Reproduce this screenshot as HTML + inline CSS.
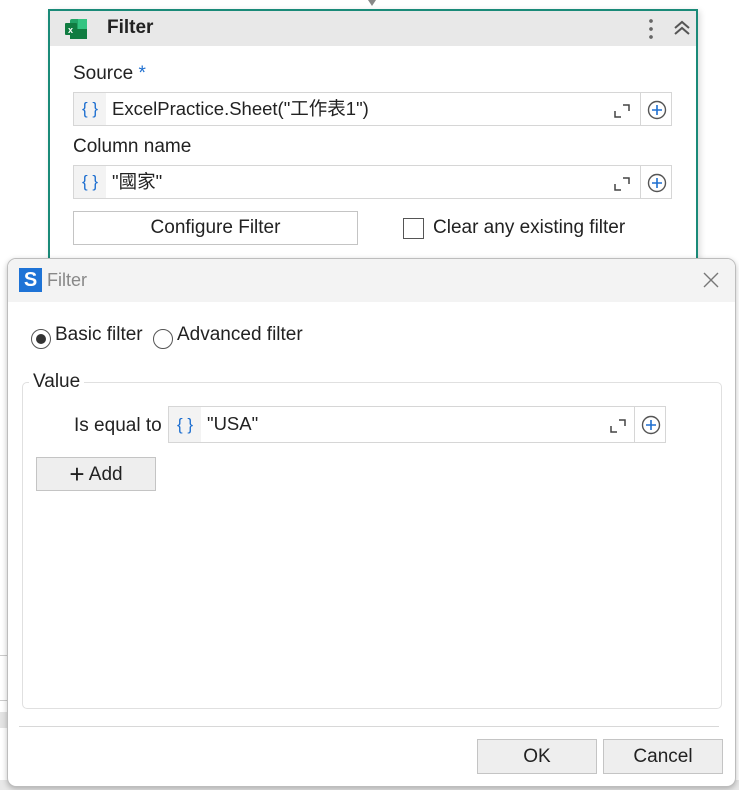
<!DOCTYPE html>
<html><head><meta charset="utf-8"><style>
*{box-sizing:border-box;margin:0;padding:0}
body{width:739px;height:790px;background:#fff;position:relative;overflow:hidden;font-family:"Liberation Sans","Noto Sans CJK TC",sans-serif;color:#222}
.a{position:absolute}
.inp{position:absolute;border:1px solid #d6d6d6;background:#fff;height:34px}
.br{position:absolute;left:0;top:0;bottom:0;width:32px;background:#f3f3f3;color:#1e6fd0;font-size:17px;text-align:center;line-height:32px}
.txt{position:absolute;left:38px;top:0;line-height:32px;font-size:18.5px}
.pl{position:absolute;border:1px solid #d6d6d6;background:#fff;height:34px;width:32px}
.btn{position:absolute;border:1px solid #c4c4c4;background:#eeeeee;font-size:19px;text-align:center}
</style></head><body>
<div class="a" style="left:0;top:655px;width:10px;height:1px;background:#ccc"></div>
<div class="a" style="left:0;top:700px;width:10px;height:1px;background:#ccc"></div>
<div class="a" style="left:0;top:712px;width:10px;height:16px;background:#e4e4e4"></div>
<div class="a" style="left:0;top:780px;width:739px;height:10px;background:#e8e8e8"></div>
<div class="a" style="left:368px;top:0;width:0;height:0;border-left:4px solid transparent;border-right:4px solid transparent;border-top:6px solid #888"></div>
<div class="a" style="left:48px;top:9px;width:650px;height:260px;border:2px solid #1a8a78;border-bottom:none;background:#fff;box-shadow:2px 2px 6px rgba(0,0,0,.15)">
 <div class="a" style="left:0;top:0;width:646px;height:35px;background:#e8e8e8"></div>
 <svg class="a" style="left:14px;top:7px" width="24" height="22"><rect x="6" y="1" width="17" height="20" rx="2" fill="#21a366"/><rect x="14" y="1" width="9" height="10" fill="#33c481"/><rect x="6" y="11" width="17" height="10" fill="#107c41"/><rect x="1" y="5" width="12" height="12" rx="1" fill="#107c41"/><text x="4" y="15" font-size="9" fill="#fff" font-family="Liberation Sans" font-weight="bold">x</text></svg>
 <div class="a" style="left:57px;top:6px;font-size:19px;font-weight:bold">Filter</div>
 <div class="a" style="left:599px;top:6px;width:4px;height:24px;background:radial-gradient(circle,#666 1.7px,transparent 2px) 0 0/4px 8px"></div>
 <svg class="a" style="left:623px;top:9px" width="18" height="16"><path d="M2 8l7-6 7 6M2 14l7-6 7 6" fill="none" stroke="#555" stroke-width="2"/></svg>
</div>
<div class="a" style="left:73px;top:63px;font-size:19px">Source <span style="color:#1e6fd0">*</span></div>
<div class="inp" style="left:73px;top:92px;width:568px"><div class="br">{ }</div><div class="txt">ExcelPractice.Sheet("工作表1")</div>
<svg class="a" style="left:540px;top:10px" width="16" height="16"><path d="M1 8v6h6M9 2h6v6" fill="none" stroke="#444" stroke-width="1.5"/></svg></div>
<div class="pl" style="left:640px;top:92px"><svg class="a" style="left:6px;top:7px" width="20" height="20"><circle cx="10" cy="10" r="8.5" fill="none" stroke="#555" stroke-width="1.4"/><path d="M10 5v10M5 10h10" stroke="#1e6fd0" stroke-width="1.6"/></svg></div>
<div class="a" style="left:73px;top:136px;font-size:19px">Column name</div>
<div class="inp" style="left:73px;top:165px;width:568px"><div class="br">{ }</div><div class="txt">"國家"</div>
<svg class="a" style="left:540px;top:10px" width="16" height="16"><path d="M1 8v6h6M9 2h6v6" fill="none" stroke="#444" stroke-width="1.5"/></svg></div>
<div class="pl" style="left:640px;top:165px"><svg class="a" style="left:6px;top:7px" width="20" height="20"><circle cx="10" cy="10" r="8.5" fill="none" stroke="#555" stroke-width="1.4"/><path d="M10 5v10M5 10h10" stroke="#1e6fd0" stroke-width="1.6"/></svg></div>
<div class="a" style="left:73px;top:211px;width:285px;height:34px;border:1px solid #c4c4c4;background:#fff;font-size:19px;text-align:center;line-height:32px">Configure Filter</div>
<div class="a" style="left:403px;top:218px;width:21px;height:21px;border:1.5px solid #555;background:#fff"></div>
<div class="a" style="left:433px;top:217px;font-size:19px">Clear any existing filter</div>
<div class="a" style="left:7px;top:258px;width:729px;height:529px;border:1px solid #bdbdbd;border-radius:9px;background:#fff;box-shadow:0 2px 6px rgba(0,0,0,.25);overflow:hidden">
 <div class="a" style="left:0;top:0;width:729px;height:43px;background:#f3f3f3"></div>
 <div class="a" style="left:11px;top:9px;width:23px;height:24px;background:#1e73d6;color:#fff;font-weight:bold;font-size:20px;text-align:center;line-height:24px">S</div>
 <div class="a" style="left:39px;top:11px;font-size:18px;color:#888">Filter</div>
 <svg class="a" style="left:694px;top:12px" width="18" height="18"><path d="M2 2l14 14M16 2L2 16" stroke="#777" stroke-width="1.4"/></svg>
</div>
<div class="a" style="left:31px;top:329px;width:20px;height:20px;border:1.5px solid #555;border-radius:50%"><div class="a" style="left:3.5px;top:3.5px;width:10px;height:10px;border-radius:50%;background:#333"></div></div>
<div class="a" style="left:55px;top:324px;font-size:19px">Basic filter</div>
<div class="a" style="left:153px;top:329px;width:20px;height:20px;border:1.5px solid #555;border-radius:50%"></div>
<div class="a" style="left:177px;top:324px;font-size:19px">Advanced filter</div>
<div class="a" style="left:22px;top:382px;width:700px;height:327px;border:1px solid #e0e0e0;border-radius:5px"></div>
<div class="a" style="left:29px;top:371px;background:#fff;padding:0 4px;font-size:19px">Value</div>
<div class="a" style="left:74px;top:415px;font-size:19px">Is equal to</div>
<div class="inp" style="left:168px;top:406px;width:467px;height:37px"><div class="br" style="line-height:35px">{ }</div><div class="txt" style="line-height:33px">"USA"</div>
<svg class="a" style="left:441px;top:11px" width="16" height="16"><path d="M1 8v6h6M9 2h6v6" fill="none" stroke="#444" stroke-width="1.5"/></svg></div>
<div class="pl" style="left:634px;top:406px;height:37px"><svg class="a" style="left:6px;top:8px" width="20" height="20"><circle cx="10" cy="10" r="8.5" fill="none" stroke="#555" stroke-width="1.4"/><path d="M10 5v10M5 10h10" stroke="#1e6fd0" stroke-width="1.6"/></svg></div>
<div class="btn" style="left:36px;top:457px;width:120px;height:34px;line-height:32px"><span style="font-size:26px;font-weight:200;vertical-align:-3px">+</span> Add</div>
<div class="a" style="left:19px;top:726px;width:700px;height:1px;background:#d8d8d8"></div>
<div class="btn" style="left:477px;top:739px;width:120px;height:35px;line-height:33px">OK</div>
<div class="btn" style="left:603px;top:739px;width:120px;height:35px;line-height:33px">Cancel</div>
</body></html>
